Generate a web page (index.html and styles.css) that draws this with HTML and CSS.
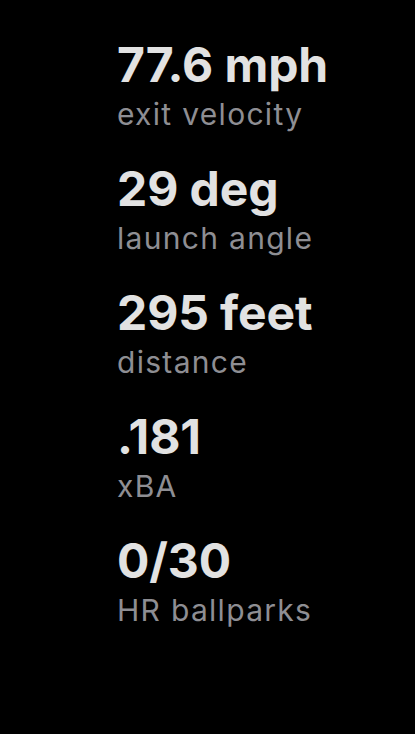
FILE: index.html
```html
<!DOCTYPE html>
<html>
<head>
<meta charset="utf-8">
<link rel="stylesheet" href="styles.css">
</head>
<body>
<div class="stats">
  <div class="stat"><div class="value">77.6 mph</div><div class="label">exit velocity</div></div>
  <div class="stat"><div class="value">29 deg</div><div class="label">launch angle</div></div>
  <div class="stat"><div class="value">295 feet</div><div class="label">distance</div></div>
  <div class="stat"><div class="value">.181</div><div class="label">xBA</div></div>
  <div class="stat"><div class="value">0/30</div><div class="label">HR ballparks</div></div>
</div>
</body>
</html>
```
FILE: styles.css
```css
html, body {
  margin: 0;
  padding: 0;
  background: #000;
  height: 100%;
}
body {
  font-family: Inter, "Noto Sans", sans-serif;
}
.stats {
  display: flex;
  flex-direction: column;
  gap: 26px;
  padding: 37px 0 0 117px;
}
.stat {
  display: flex;
  flex-direction: column;
}
.value {
  color: #e2e2e2;
  font-weight: 700;
  font-size: 48px;
  line-height: 56px;
  letter-spacing: -0.1px;
}
.label {
  color: #8e8e93;
  font-size: 30px;
  line-height: 42px;
  font-weight: 400;
  letter-spacing: 1.3px;
}
```
